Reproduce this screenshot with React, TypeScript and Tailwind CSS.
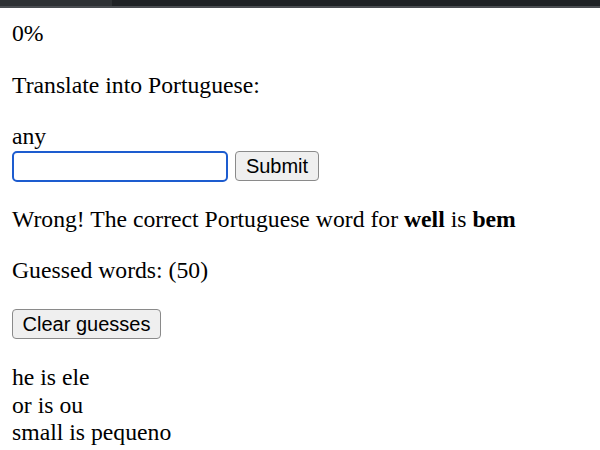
import { useState } from "react"

const GUESSES = [
  { en: "he", pt: "ele" },
  { en: "or", pt: "ou" },
  { en: "small", pt: "pequeno" },
]

export default function App() {
  const [answer, setAnswer] = useState("")

  return (
    <main className="min-h-screen bg-white text-black">
      <div className="h-[8px] flex flex-col">
        <div className="flex-1 flex">
          <div className="w-[112px] bg-[#2e3134]"></div>
          <div className="flex-1 bg-[#1f2225]"></div>
        </div>
        <div className="h-[2px] bg-[#4b4e52]"></div>
      </div>

      <div className="px-[12px] pt-[12px] font-['Liberation_Serif',serif] text-[23.7px] leading-[27.6px]">
        <div>0%</div>
        <p className="my-[24px]">Translate into Portuguese:</p>
        <div>any</div>
        <div className="flex items-start h-[31px]">
          <input
            type="text"
            value={answer}
            onChange={e => setAnswer(e.target.value)}
            className="w-[216px] h-[31px] border-2 border-[#1d5ccf] rounded-[5px] bg-white px-1 text-[20px] outline-none"
          />
          <button className="ml-[7px] h-[30px] w-[84px] bg-[#efefef] border border-[#8a8a8a] rounded-[4px] font-['Liberation_Sans',sans-serif] text-[20px] leading-none text-black">
            Submit
          </button>
        </div>
        <p className="my-[24px]">
          Wrong! The correct Portuguese word for <b>well</b> is <b>bem</b>
        </p>
        <p className="my-[24px]">Guessed words: (50)</p>
        <div className="my-[24px] h-[31px]">
          <button className="h-[30px] w-[149px] bg-[#efefef] border border-[#8a8a8a] rounded-[4px] font-['Liberation_Sans',sans-serif] text-[20px] leading-none text-black">
            Clear guesses
          </button>
        </div>
        <div>
          {GUESSES.map(g => (
            <div key={g.en}>{g.en} is {g.pt}</div>
          ))}
        </div>
      </div>
    </main>
  )
}
